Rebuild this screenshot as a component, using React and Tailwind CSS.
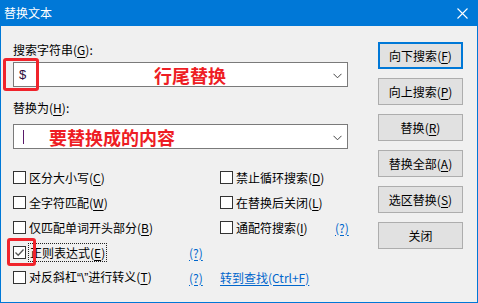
import { useState } from 'react'

const font = { fontFamily: '"Noto Sans CJK SC", "Microsoft YaHei", sans-serif' }
const latin = { fontFamily: '"Liberation Sans", sans-serif' }

// label with an underlined access key, e.g. 搜索字符串(G):
const Key = ({ pre, k, post = ')' }) => (
  <span>
    {pre}(<span className="underline underline-offset-2">{k}</span>{post}
  </span>
)

const Chevron = () => (
  <svg width="9" height="6" viewBox="0 0 9 6" className="text-[#444]">
    <path d="M0.5 0.8 L4.5 4.8 L8.5 0.8" fill="none" stroke="currentColor" strokeWidth="1" />
  </svg>
)

const Combo = ({ children }) => (
  <div className="relative h-[25px] w-[335px] bg-white border border-[#7a7a7a] flex items-center">
    {children}
    <div className="absolute right-[5px] top-[10px]">
      <Chevron />
    </div>
  </div>
)

const Checkbox = ({ checked }) => (
  <div className="w-[13px] h-[13px] bg-white border border-[#333] flex items-center justify-center shrink-0">
    {checked && (
      <svg width="11" height="11" viewBox="0 0 11 11">
        <path d="M1.5 5.5 L4.2 8.2 L9.5 2.5" fill="none" stroke="#555" strokeWidth="1.3" />
      </svg>
    )}
  </div>
)

const Option = ({ label, checked, focus }) => (
  <div className="flex items-center gap-[3px]">
    <Checkbox checked={checked} />
    <span className={focus ? 'outline outline-1 outline-dotted outline-[#222] px-[1px] leading-[17px]' : 'leading-[17px]'}>
      {label}
    </span>
  </div>
)

const Help = () => <span className="text-[#0066cc] underline underline-offset-2">(?)</span>

const buttons = [
  { pre: '向下搜索', k: 'F', primary: true },
  { pre: '向上搜索', k: 'P' },
  { pre: '替换', k: 'R' },
  { pre: '替换全部', k: 'A' },
  { pre: '选区替换', k: 'S' },
  { label: '关闭' }
]

const App = () => {
  const [search] = useState('$')

  return (
    <div className="w-[478px] h-[303px] bg-[#0078d7] flex flex-col text-[12px] text-black" style={font}>
      <div className="h-[26px] flex items-center justify-between pl-[4px] pr-[10px] text-white">
        <span className="leading-none">替换文本</span>
        <svg width="11" height="11" viewBox="0 0 11 11">
          <path d="M0.5 0.5 L10.5 10.5 M10.5 0.5 L0.5 10.5" stroke="white" strokeWidth="1.1" />
        </svg>
      </div>

      <div className="relative flex-1 mx-[1px] mb-[1px] bg-[#f0f0f0] flex">
        <div className="flex-1 flex flex-col pl-[12px] pt-[16px]">
          <div className="h-[16px] leading-[16px]">
            <Key pre="搜索字符串" k="G" post="):" />
          </div>
          <div className="mt-[4px]">
            <Combo>
              <span className="pl-[5px] w-[140px] text-[13px] text-[#2a0a3a]" style={latin}>{search}</span>
              <span className="text-[18px] font-bold text-[#ee1d24] leading-none">行尾替换</span>
            </Combo>
          </div>
          <div className="mt-[13px] h-[16px] leading-[16px]">
            <Key pre="替换为" k="H" post="):" />
          </div>
          <div className="mt-[8px]">
            <Combo>
              <span className="ml-[9px] w-[1px] h-[14px] bg-[#5a1a6a]" />
              <span className="ml-[25px] text-[18px] font-bold text-[#ee1d24] leading-none">要替换成的内容</span>
            </Combo>
          </div>

          <div className="mt-[16px] grid grid-cols-[207px_1fr] auto-rows-[25px] items-center">
            <Option label={<Key pre="区分大小写" k="C" />} />
            <Option label={<Key pre="禁止循环搜索" k="D" />} />
            <Option label={<Key pre="全字符匹配" k="W" />} />
            <Option label={<Key pre="在替换后关闭" k="L" />} />
            <Option label={<Key pre="仅匹配单词开头部分" k="B" />} />
            <div className="flex items-center">
              <div className="w-[115px]">
                <Option label={<Key pre="通配符搜索" k="I" />} />
              </div>
              <Help />
            </div>
            <div className="flex items-center">
              <div className="w-[176px]">
                <Option label={<Key pre="正则表达式" k="E" />} checked focus />
              </div>
              <Help />
            </div>
            <div />
            <div className="flex items-center">
              <div className="w-[176px]">
                <Option
                  label={
                    <Key
                      pre={
                        <>
                          对反斜杠<span style={latin}>“\”</span>进行转义
                        </>
                      }
                      k="T"
                    />
                  }
                />
              </div>
              <Help />
            </div>
            <span className="text-[#0066cc] underline underline-offset-2">转到查找(Ctrl+F)</span>
          </div>
        </div>

        <div className="w-[85px] mr-[14px] pt-[16px] flex flex-col gap-[9px]">
          {buttons.map((b, i) => (
            <button
              key={i}
              className={`h-[27px] w-full bg-[#e1e1e1] text-[12px] ${
                b.primary ? 'border-2 border-[#0078d7]' : 'border border-[#adadad]'
              }`}
            >
              {b.label ?? <Key pre={b.pre} k={b.k} />}
            </button>
          ))}
        </div>

        {/* red annotation boxes */}
        <div className="absolute left-[2px] top-[32px] w-[36px] h-[33px] border-[3px] border-[#f0232b] rounded-[3px]" />
        <div className="absolute left-[6px] top-[212px] w-[29px] h-[28px] border-[3px] border-[#f0232b] rounded-[3px]" />
      </div>
    </div>
  )
}

export default App
